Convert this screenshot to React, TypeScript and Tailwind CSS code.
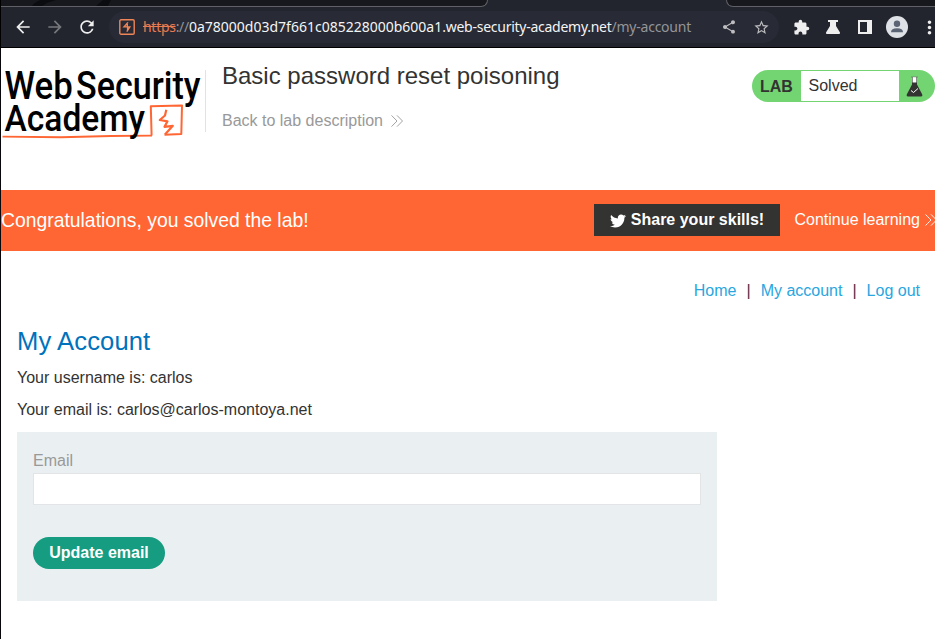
import React from "react";
import {
  MdArrowBack,
  MdArrowForward,
  MdExtension,
  MdMoreVert,
  MdRefresh,
  MdShare,
  MdStarBorder,
} from "react-icons/md";
import { FaTwitter } from "react-icons/fa";

function Chevrons({ className }: { className?: string }) {
  return (
    <svg viewBox="0 0 12 12" width="12" height="12" fill="none" stroke="currentColor" strokeWidth="0.9" className={className}>
      <path d="M0.5 0.4 6 6 0.5 11.6M6 0.4 11.5 6 6 11.6" />
    </svg>
  );
}

function BrowserBar() {
  return (
    <header className="flex h-12 w-full flex-col border-b border-l border-black bg-[#23252e]">
      <div className="flex h-[7px] shrink-0 justify-between">
        <div className="relative w-[487px] overflow-hidden rounded-br-[7px] border-r border-b border-[#606167] bg-[#17181d]">
          <svg className="absolute left-0 top-0" width="300" height="6" fill="#0b0c10">
            <path d="M39 0h16q-8 2-14 6H31q3-4 8-6zM102 0h8l-3 6H95z" />
          </svg>
        </div>
        <div className="w-[209px] rounded-bl-[7px] border-b border-l border-[#606167] bg-[#17181d]" />
      </div>
      <div className="flex h-10 items-center overflow-hidden text-[#eeeeee]">
        <div className="flex w-[108px] shrink-0 items-center gap-3 pl-[12px]">
          <MdArrowBack size={20} />
          <MdArrowForward size={20} className="text-[#77787d]" />
          <MdRefresh size={20} />
        </div>
        <div className="flex h-8 w-[670px] shrink-0 items-center rounded-full bg-[#282a35] pl-[10px]">
          <svg width="16" height="16" viewBox="0 0 16 16" fill="none" stroke="#f08558" strokeWidth="1.4">
            <rect x="0.8" y="0.8" width="14.4" height="14.4" rx="1.2" />
            <path d="M9 3.4 5 7.9h5.8L7.8 12.6M8.3 3.8v4M8.6 8.2v3.6" />
          </svg>
          <div className="ml-2 w-[575px] whitespace-nowrap font-['Noto_Sans',sans-serif] text-[14px] leading-8 text-[#949599]">
            <span className="tracking-[-0.29px] text-[#e87b50] line-through">https</span>
            <span className="tracking-[-0.29px]">://</span>
            <span className="text-[#f4f4f4]">0a78000d03d7f661c085228000b600a1</span>
            <span className="tracking-[-0.26px] text-[#f4f4f4]">.web-security-academy.net</span>
            <span className="tracking-[-0.24px]">/my-account</span>
          </div>
          <div className="flex items-center gap-4 text-[#bdbdc0]">
            <MdShare size={16} className="ml-[3px]" />
            <MdStarBorder size={17} />
          </div>
        </div>
        <div className="flex shrink-0 items-center pl-[14px]">
          <MdExtension size={17} />
          <svg className="ml-[15px]" width="16" height="16" viewBox="0 0 16 16" fill="currentColor">
            <path d="M3 1h10v2h-2v4l4 6.5Q15.3 15 14 15H2q-1.3 0-1-1.5L5 7V3H3z" />
          </svg>
          <svg className="ml-4" width="16" height="16" viewBox="0 0 16 16">
            <path fill="currentColor" fillRule="evenodd" d="M1 1h14v14H1zM3 3v10h7V3z" />
          </svg>
          <svg className="ml-[13px]" width="22" height="22" viewBox="0 0 22 22" fill="#5b6475">
            <circle cx="11" cy="11" r="11" fill="#dee1e6" />
            <circle cx="11" cy="7.8" r="3.2" />
            <path d="M5 16.2q0-4 6-4t6 4z" />
          </svg>
          <MdMoreVert size={21} className="ml-[11px] shrink-0" />
        </div>
      </div>
    </header>
  );
}

function AcademyLogo() {
  return (
    <svg width="204" height="80" viewBox="0 0 204 80" className="shrink-0 overflow-visible font-['Roboto',sans-serif] font-medium" fill="#000">
      <g fill="none" stroke="#ff6633" strokeLinejoin="round">
        <path strokeWidth="2" d="M150.6 71.5 149.8 42.3 181 41.4 180.3 70 163.5 70.8" />
        <path strokeWidth="1.9" d="M1.5 72.6 60 73.2 110 72 151 71.6" />
        <path strokeWidth="2.2" d="M165.3 45.8 164 51.5 158.8 56 166.5 57.3 163.5 62.8 171.8 61.8 164 70.5" />
      </g>
      <text x="3.4" y="34.5" fontSize="38" textLength="68.3" lengthAdjust="spacingAndGlyphs">Web</text>
      <text x="75" y="34.5" fontSize="38" textLength="124.5" lengthAdjust="spacingAndGlyphs">Security</text>
      <text x="3.6" y="67.3" fontSize="37" textLength="140.4" lengthAdjust="spacingAndGlyphs">Academy</text>
    </svg>
  );
}

function LabHeader() {
  return (
    <section className="flex h-[142px] items-start pt-4">
      <AcademyLogo />
      <div className="mt-[6px] h-[62px] w-px bg-[#e2e2e2]" />
      <div className="ml-4 flex-1">
        <h2 className="-mt-0.5 text-[24px] leading-7">Basic password reset poisoning</h2>
        <a className="mt-[21px] flex items-center leading-5 text-[#999999]">
          Back to lab description
          <Chevrons className="-mt-px ml-[8.5px]" />
        </a>
      </div>
      <div className="mt-[6px] flex h-8 w-[183px] items-center rounded-full bg-[#72d572]">
        <span className="w-[49px] pl-2 pt-px font-bold">LAB</span>
        <span className="h-[30px] w-[98px] bg-white pl-[7.5px] leading-[30px]">Solved</span>
        <svg className="ml-[6.5px]" width="17" height="21" viewBox="0 0 17 21">
          <path d="M6.5 1h4v8h-4z" fill="#fff" />
          <path d="M5 1h7M6.5 1v7M10.5 1v7" stroke="#777" strokeWidth="0.8" />
          <path d="M6 6.5h5v2L16 18q1 2.5-1 2.5H2Q0 20.5 1 18L6 8.5z" fill="#333332" />
          <path d="m5 14.5 2.5 2 4.5-4" fill="none" stroke="#fff" strokeWidth="1" />
          <path d="M7 1.5h3V6H7z" fill="#fff" />
        </svg>
      </div>
    </section>
  );
}

export default function App() {
  return (
    <div className="h-[639px] w-[935px] overflow-hidden bg-white font-['Liberation_Sans',Arial,sans-serif] text-base text-[#333332]">
      <BrowserBar />
      <div className="h-[591px] border-l border-[#07070c]">
        <LabHeader />
        <section className="flex h-[61px] items-start overflow-hidden bg-[#ff6633] pt-[14px] text-white">
          <p className="flex-1 text-[19.35px] leading-8">Congratulations, you solved the lab!</p>
          <button className="flex h-8 w-[186px] shrink-0 items-center justify-center gap-[5px] bg-[#333332] font-bold">
            <FaTwitter size={16} className="mt-px" />
            Share your skills!
          </button>
          <a className="ml-[14.5px] flex h-8 w-[140.5px] shrink-0 items-center whitespace-nowrap">
            Continue learning
            <Chevrons className="ml-[5px] shrink-0" />
          </a>
        </section>
        <main className="px-4">
          <nav className="-mr-px flex justify-end pt-7 leading-6 text-[#29a6df]">
            <a>Home</a>
            <span className="mx-[10px] text-[#4d3040]">|</span>
            <a>My account</a>
            <span className="mx-[10px] text-[#4d3040]">|</span>
            <a>Log out</a>
          </nav>
          <h1 className="mt-[22px] text-[25.6px] leading-8 tracking-[0.1px] text-[#0072bc]">My Account</h1>
          <p className="mt-[9px] leading-6">Your username is: carlos</p>
          <p className="mt-2 leading-6">Your email is: carlos@carlos-montoya.net</p>
          <form className="mt-[10px] h-[169px] w-[700px] bg-[#eaeff2] p-4">
            <label className="block h-[25px] pt-px leading-6 text-[#999999]">Email</label>
            <input className="block h-8 w-full border border-[#e2e4e5] bg-white px-2 outline-none" />
            <button type="button" className="mt-8 h-8 w-[132px] rounded-full bg-[#169c80] font-bold text-white">
              Update email
            </button>
          </form>
        </main>
      </div>
    </div>
  );
}
